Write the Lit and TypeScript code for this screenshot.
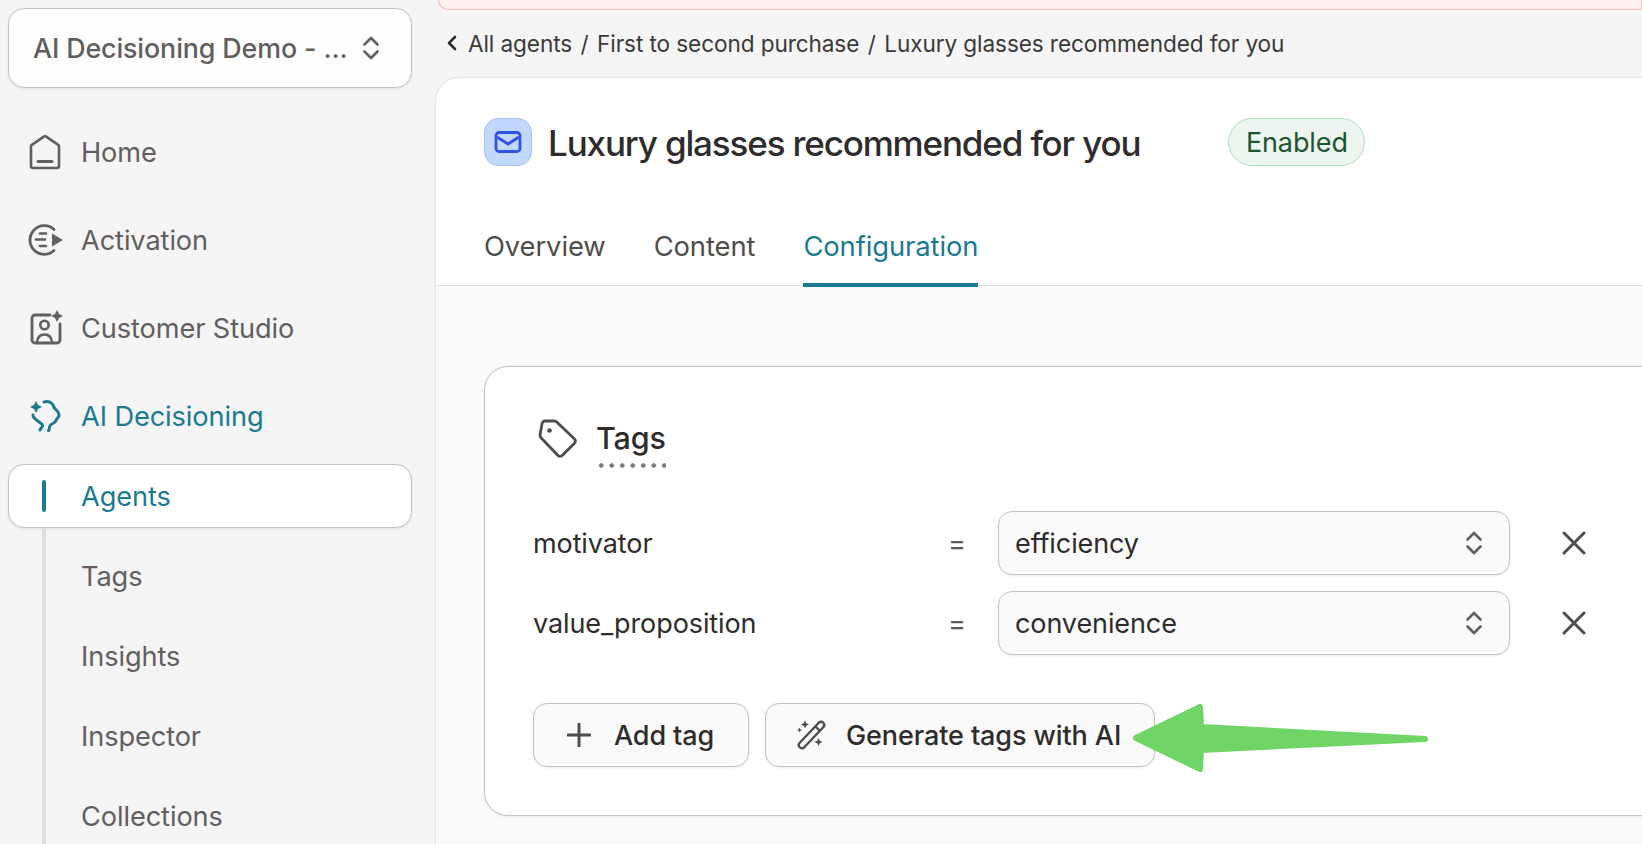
import { LitElement, html, css, svg } from 'lit';
import { customElement } from 'lit/decorators.js';

const updown = svg`<path d="M2.500 8.500L9 2L15.500 8.500M2.500 15.500L9 22L15.500 15.500" fill="none" stroke="currentColor" stroke-width="2.600" stroke-linecap="round" stroke-linejoin="round"></path>`;

const homeIcon = html`<svg class="nav-icon" viewBox="0 0 36 36"><path d="M3 12.500a2 2 0 0 1 .8-1.600L15.800 2.600a2 2 0 0 1 2.400 0L30.200 10.900a2 2 0 0 1 .8 1.600V32a2 2 0 0 1-2 2H5a2 2 0 0 1-2-2Z" fill="none" stroke="currentColor" stroke-width="2.600" stroke-linejoin="round"></path><path d="M10 27.500H24" stroke="currentColor" stroke-width="3" stroke-linecap="round"></path></svg>`;

const activationIcon = html`<svg class="nav-icon" viewBox="0 0 36 36"><path d="M26 7.500A14.300 14.300 0 1 0 26 28.500" fill="none" stroke="currentColor" stroke-width="2.800" stroke-linecap="round"></path><path d="M12 11.500H18M8 17.500H17M12 24H18" stroke="currentColor" stroke-width="2.600" stroke-linecap="round"></path><path d="M24 11.500L35 18L24 24.500Z" fill="currentColor"></path></svg>`;

const studioIcon = html`<svg class="nav-icon" viewBox="0 0 36 36"><path d="M22 5H7a3 3 0 0 0-3 3V30a3 3 0 0 0 3 3H29a3 3 0 0 0 3-3V14" fill="none" stroke="currentColor" stroke-width="2.800" stroke-linecap="round"></path><circle cx="16.500" cy="15" r="4.200" fill="none" stroke="currentColor" stroke-width="2.600"></circle><path d="M9 32.500C9.500 27 12.500 24.500 16.500 24.500S23.500 27 24 32.500" fill="none" stroke="currentColor" stroke-width="2.600"></path><path d="M29 0L31 4L35 6L31 8L29 12L27 8L23 6L27 4Z" fill="currentColor"></path></svg>`;

const aiIcon = html`<svg class="nav-icon" viewBox="0 0 36 36"><path d="M16 4C21 2.500 25 5 26 9.500C27 11.500 31 13 31 17C31 19.500 29 20 28 22.500C27 25.500 24 25.500 22.500 27C21 28.500 22 30.500 20.500 32.500" fill="none" stroke="currentColor" stroke-width="3" stroke-linecap="round" stroke-linejoin="round"></path><path d="M5 17C4.500 19.500 8 21.500 11 24C13 25.500 15 26.500 14.500 28C14 29.500 12.500 30.500 12 32" fill="none" stroke="currentColor" stroke-width="3" stroke-linecap="round" stroke-linejoin="round"></path><path d="M8 3L10 7L14 9L10 11L8 15L6 11L2 9L6 7Z" fill="currentColor"></path></svg>`;

const closeIcon = html`<svg class="close" viewBox="0 0 24 24"><path d="M2 2L22 22M22 2L2 22" stroke="currentColor" stroke-width="3" stroke-linecap="round"></path></svg>`;

@customElement('tag-row')
export class TagRow extends LitElement {
  static override properties = { name: {}, value: {} };
  declare name: string;
  declare value: string;

  static override styles = css`
    :host {
      display: flex;
      align-items: center;
      height: 64px;
      color: #2e2c2c;
    }
    .name {
      width: 415px;
      flex: none;
    }
    .eq {
      width: 50px;
      flex: none;
      color: #5a5757;
    }
    .select {
      width: 512px;
      height: 64px;
      flex: none;
      box-sizing: border-box;
      display: flex;
      align-items: center;
      justify-content: space-between;
      padding: 0 16px;
      background: #fafafa;
      border: 1px solid #c4c2c2;
      border-radius: 14px;
      box-shadow: 0 1px 3px rgba(0, 0, 0, 0.08);
    }
    .select svg {
      width: 18px;
      height: 24px;
      margin-right: 10px;
      color: #625e5e;
    }
    .close {
      width: 24px;
      height: 24px;
      margin-left: 52px;
      color: #4f4c4c;
    }
  `;

  override render() {
    return html`
      <span class="name">${this.name}</span>
      <span class="eq">=</span>
      <div class="select">
        <span>${this.value}</span>
        <svg viewBox="0 0 18 24">${updown}</svg>
      </div>
      ${closeIcon}
    `;
  }
}

@customElement('app-root')
export class AppRoot extends LitElement {
  static override styles = css`
    :host {
      display: block;
      position: relative;
      width: 1642px;
      height: 844px;
      overflow: hidden;
      background: #f5f5f5;
      font-family: Inter, 'Noto Sans', sans-serif;
      font-size: 27.200px;
      letter-spacing: -0.1px;
    }
    .layout {
      display: flex;
      height: 844px;
    }

    /* sidebar */
    .sidebar {
      width: 436px;
      flex: none;
      box-sizing: border-box;
      padding: 8px 24px 0 8px;
      color: #625e5e;
    }
    .switcher {
      height: 80px;
      box-sizing: border-box;
      display: flex;
      align-items: center;
      justify-content: space-between;
      padding: 0 31px 0 24px;
      margin-bottom: 20px;
      background: #fdfdfd;
      border: 1px solid #c4c2c2;
      border-radius: 16px;
      box-shadow: 0 1px 3px rgba(0, 0, 0, 0.08);
      font-size: 26.800px;
      font-weight: 500;
    }
    .switcher svg {
      width: 18px;
      height: 24px;
    }
    .nav-item {
      height: 88px;
      display: flex;
      align-items: center;
      gap: 17px;
      padding-left: 20px;
    }
    .nav-icon {
      width: 36px;
      height: 36px;
      flex: none;
    }
    .teal {
      color: #1a7a8f;
    }
    .agents {
      height: 64px;
      margin-top: 4px;
      box-sizing: border-box;
      display: flex;
      align-items: center;
      padding-left: 33px;
      background: #fff;
      border: 1px solid #c4c2c2;
      border-radius: 16px;
      box-shadow: 0 1px 3px rgba(0, 0, 0, 0.08);
      color: #1a7a8f;
    }
    .agents i {
      width: 4px;
      height: 32px;
      border-radius: 2px;
      background: #1a7a8f;
      margin-right: 35px;
    }
    .sub {
      margin-left: 34px;
      padding-top: 8px;
      border-left: 4px solid #e0dddd;
    }
    .sub div {
      height: 80px;
      display: flex;
      align-items: center;
      padding-left: 35px;
    }

    /* main column */
    .main {
      flex: 1;
      min-width: 0;
      font-size: 27px;
    }
    .banner {
      height: 10px;
      box-sizing: border-box;
      margin-left: 2px;
      background: #fdf1f0;
      border: 1px solid #f5bcbc;
      border-top: 0;
      border-radius: 0 0 0 14px;
    }
    .crumbs {
      height: 68px;
      box-sizing: border-box;
      display: flex;
      align-items: center;
      padding: 0 0 2px 11px;
      color: #3a3838;
      font-size: 22.600px;
    }
    .crumbs svg {
      width: 10px;
      height: 16px;
      margin-right: 11px;
    }
    .crumbs b {
      font-weight: 400;
      margin: 0 8.500px;
    }
    .card {
      height: 780px;
      background: #fafafa;
      border-radius: 24px 0 0 0;
      box-shadow: -1px 0 2px rgba(0, 0, 0, 0.07), 0 -1px 2px rgba(0, 0, 0, 0.05);
      overflow: hidden;
    }
    .head {
      height: 208px;
      box-sizing: border-box;
      background: #fff;
      border-bottom: 1px solid #e0dfdf;
      padding: 40px 0 0 48px;
    }
    .title-row {
      height: 48px;
      display: flex;
      align-items: center;
    }
    .mail {
      width: 48px;
      height: 48px;
      box-sizing: border-box;
      flex: none;
      display: flex;
      align-items: center;
      justify-content: center;
      background: #c3d8fd;
      border: 1px solid #a8c5fb;
      border-radius: 14px;
    }
    .mail svg {
      width: 28px;
      height: 24px;
    }
    h1 {
      margin: 1px 88px 0 16px;
      font-size: 35px;
      font-weight: 500;
      letter-spacing: -1.150px;
      color: #2e2c2c;
    }
    .badge {
      height: 48px;
      box-sizing: border-box;
      display: flex;
      align-items: center;
      padding: 0 16.500px;
      background: #ecf5ef;
      border: 1px solid #aee0bb;
      border-radius: 24px;
      color: #1c5631;
    }
    .tabs {
      display: flex;
      gap: 48px;
      margin-top: 43px;
      font-size: 27.400px;
      color: #4f4c4c;
    }
    .tabs span {
      height: 78px;
      box-sizing: border-box;
      display: flex;
      align-items: center;
      padding-bottom: 4px;
    }
    .tabs .on {
      color: #1a7a8f;
      border-bottom: 4px solid #1a7a8f;
      padding-bottom: 0;
    }
    .body {
      padding: 80px 0 0 48px;
    }
    .tags {
      width: 1240px;
      height: 450px;
      box-sizing: border-box;
      background: #fff;
      border: 1px solid #c4c2c2;
      border-radius: 24px;
      box-shadow: 0 1px 3px rgba(0, 0, 0, 0.07);
      padding: 52px 0 0 48px;
      color: #2e2c2c;
    }
    .tags-head {
      display: flex;
      gap: 20px;
      height: 48px;
      margin-bottom: 44px;
      font-size: 30.500px;
      font-weight: 500;
    }
    .tags-head svg {
      width: 40px;
      height: 40px;
      margin-left: 5px;
    }
    .tags-head span {
      height: 49px;
      box-sizing: border-box;
      margin-left: -2px;
      background: radial-gradient(circle, #7a7777 2px, transparent 2.400px) left bottom / 10.500px 5px repeat-x;
    }
    .rows {
      display: flex;
      flex-direction: column;
      gap: 16px;
    }
    .actions {
      display: flex;
      gap: 16px;
      margin-top: 48px;
    }
    .btn {
      height: 64px;
      box-sizing: border-box;
      display: flex;
      align-items: center;
      background: #fafafa;
      border: 1px solid #c4c2c2;
      border-radius: 14px;
      box-shadow: 0 1px 3px rgba(0, 0, 0, 0.08);
      font-weight: 500;
      color: #2e2c2c;
    }
    .btn.add {
      width: 216px;
      padding-left: 33px;
      gap: 23px;
    }
    .btn.add svg {
      width: 24px;
      height: 24px;
      color: #4f4c4c;
    }
    .btn.gen {
      width: 390px;
      padding-left: 29px;
      gap: 19px;
    }
    .btn.gen svg {
      width: 32px;
      height: 32px;
      color: #4f4c4c;
    }

    /* annotation drawn over the page */
    .arrow {
      position: absolute;
      left: 1130px;
      top: 700px;
      width: 300px;
      height: 76px;
    }
  `;

  override render() {
    return html`
      <div class="layout">
        <nav class="sidebar">
          <div class="switcher">
            <span>AI Decisioning Demo - ...</span>
            <svg viewBox="0 0 18 24">${updown}</svg>
          </div>
          <div class="nav-item">${homeIcon}<span>Home</span></div>
          <div class="nav-item">${activationIcon}<span>Activation</span></div>
          <div class="nav-item">${studioIcon}<span>Customer Studio</span></div>
          <div class="nav-item teal">${aiIcon}<span>AI Decisioning</span></div>
          <div class="agents"><i></i><span>Agents</span></div>
          <div class="sub">
            <div>Tags</div>
            <div>Insights</div>
            <div>Inspector</div>
            <div>Collections</div>
          </div>
        </nav>
        <main class="main">
          <div class="banner"></div>
          <div class="crumbs">
            <svg viewBox="0 0 10 16"><path d="M8 2L2 8L8 14" fill="none" stroke="#2e2c2c" stroke-width="2.600" stroke-linecap="round" stroke-linejoin="round"></path></svg>
            <span>All agents</span><b>/</b><span>First to second purchase</span><b>/</b><span>Luxury glasses recommended for you</span>
          </div>
          <div class="card">
            <div class="head">
              <div class="title-row">
                <div class="mail">
                  <svg viewBox="0 0 28 24"><rect x="2" y="2.500" width="24" height="19" rx="3" fill="none" stroke="#2f54e4" stroke-width="2.800"></rect><path d="M3 7L14 14L25 7" fill="none" stroke="#2f54e4" stroke-width="2.800"></path></svg>
                </div>
                <h1>Luxury glasses recommended for you</h1>
                <span class="badge">Enabled</span>
              </div>
              <div class="tabs">
                <span>Overview</span>
                <span>Content</span>
                <span class="on">Configuration</span>
              </div>
            </div>
            <div class="body">
              <section class="tags">
                <div class="tags-head">
                  <svg viewBox="0 0 40 40"><path d="M4 5a3 3 0 0 1 3-3H16a4 4 0 0 1 3 1.200L36.500 20a3 3 0 0 1 0 4.200L24.200 36.500a3 3 0 0 1-4.200 0L3.200 19A4 4 0 0 1 2 16Z" fill="none" stroke="#4f4c4c" stroke-width="2.800" stroke-linejoin="round"></path><circle cx="11.500" cy="11.500" r="2.300" fill="#4f4c4c"></circle></svg>
                  <span>Tags</span>
                </div>
                <div class="rows">
                  <tag-row name="motivator" value="efficiency"></tag-row>
                  <tag-row name="value_proposition" value="convenience"></tag-row>
                </div>
                <div class="actions">
                  <div class="btn add">
                    <svg viewBox="0 0 24 24"><path d="M12 1V23M1 12H23" stroke="currentColor" stroke-width="3" stroke-linecap="round"></path></svg>
                    <span>Add tag</span>
                  </div>
                  <div class="btn gen">
                    <svg viewBox="0 0 32 32"><path d="M24 3.500a3.200 3.200 0 0 1 4.500 4.500L9 28.500a3.200 3.200 0 0 1-4.500-4.500Z" fill="none" stroke="currentColor" stroke-width="2.400" stroke-linejoin="round"></path><path d="M20.500 7.500L25 12" stroke="currentColor" stroke-width="2.400"></path><path d="M10 1.500L11.300 4.200L14 5.500L11.300 6.800L10 9.500L8.700 6.800L6 5.500L8.700 4.200ZM4.500 8.500L5.300 10.200L7 11L5.300 11.800L4.500 13.500L3.700 11.800L2 11L3.700 10.200ZM23.500 19L24.800 21.700L27.500 23L24.800 24.300L23.500 27L22.200 24.300L19.500 23L22.200 21.700Z" fill="currentColor"></path></svg>
                    <span>Generate tags with AI</span>
                  </div>
                </div>
              </section>
            </div>
          </div>
        </main>
      </div>
      <svg class="arrow" viewBox="0 0 300 76">
        <path d="M6 38L70 7L71 27L295 39L71 50L70 69Z" fill="#71d466" stroke="#71d466" stroke-width="6" stroke-linejoin="round"></path>
      </svg>
    `;
  }
}
